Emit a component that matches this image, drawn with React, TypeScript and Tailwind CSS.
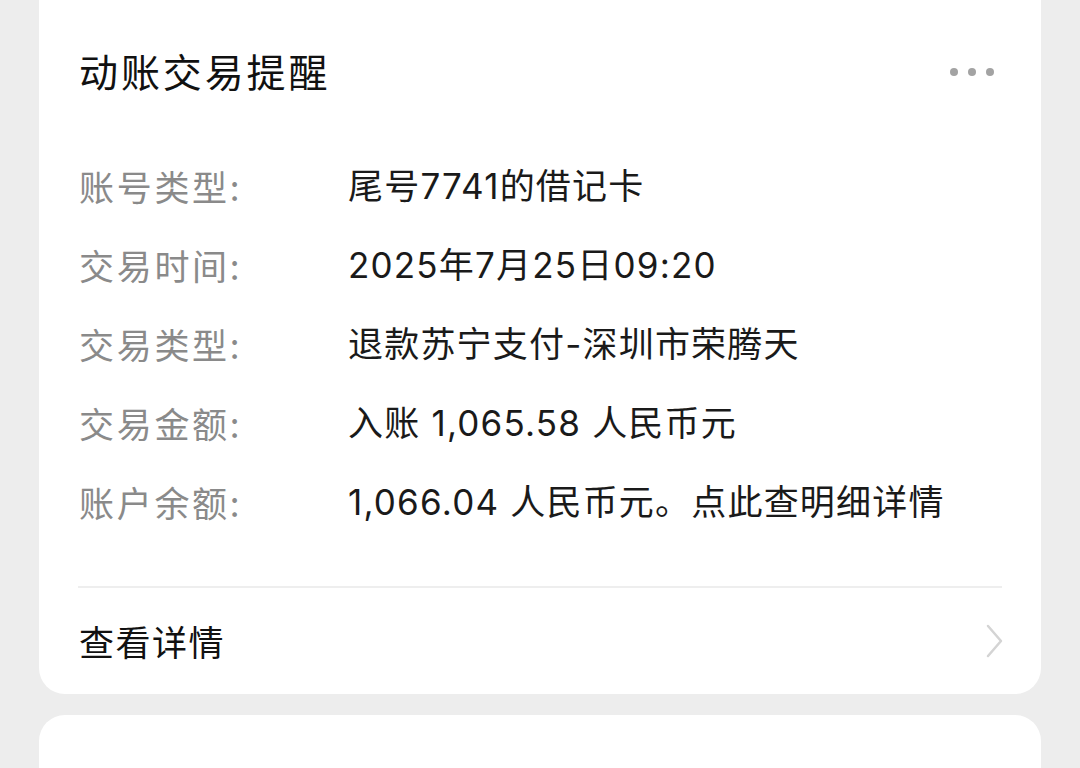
import React from "react";

const rows: [string, string][] = [
  ["账号类型:", "尾号7741的借记卡"],
  ["交易时间:", "2025年7月25日09:20"],
  ["交易类型:", "退款苏宁支付-深圳市荣腾天"],
  ["交易金额:", "入账 1,065.58 人民币元"],
  ["账户余额:", "1,066.04 人民币元。点此查明细详情"],
];

export default function App() {
  return (
    <div
      className="w-[1080px] h-[768px] overflow-hidden bg-[#ededed] px-[39px]"
      style={{ fontFamily: '"Noto Sans CJK SC", "Noto Sans", sans-serif' }}
    >
      <div className="bg-white rounded-b-[26px] px-[39px]">
        <div className="h-[144px] flex items-center justify-between">
          <div className="text-[39px] font-normal text-[#111] pl-[1px] tracking-[2.9px] mt-[-4px]">动账交易提醒</div>
          <div className="flex gap-[10px] pr-[8px]">
            <span className="w-[8px] h-[8px] rounded-full bg-[#a3a3a3]" />
            <span className="w-[8px] h-[8px] rounded-full bg-[#a3a3a3]" />
            <span className="w-[8px] h-[8px] rounded-full bg-[#a3a3a3]" />
          </div>
        </div>
        <div className="pt-[3px] pb-[44px]">
          {rows.map(([k, v]) => (
            <div key={k} className="h-[79px] flex items-center">
              <div className="w-[270px] pl-[1px] text-[35px] tracking-[2.7px] text-[#8a8a8a]">{k}</div>
              <div
                className="text-[35px] tracking-[1.2px] text-[#1a1a1a]"
                style={{ fontFamily: 'Inter, "Noto Sans CJK SC", sans-serif' }}
              >
                {v}
              </div>
            </div>
          ))}
        </div>
        <div className="h-[2px] bg-[#eeeeee]" />
        <div className="h-[106px] flex items-center justify-between">
          <div className="text-[35px] tracking-[1.5px] text-[#111] pl-[1px]">查看详情</div>
          <svg width="20" height="36" viewBox="0 0 20 36" className="mr-[-2px]">
            <polyline points="4,3 17,18 4,33" fill="none" stroke="#d4d4d4" strokeWidth="2.5" strokeLinecap="round" strokeLinejoin="round" />
          </svg>
        </div>
      </div>
      <div className="mt-[21px] bg-white rounded-[26px] h-[200px]" />
    </div>
  );
}
